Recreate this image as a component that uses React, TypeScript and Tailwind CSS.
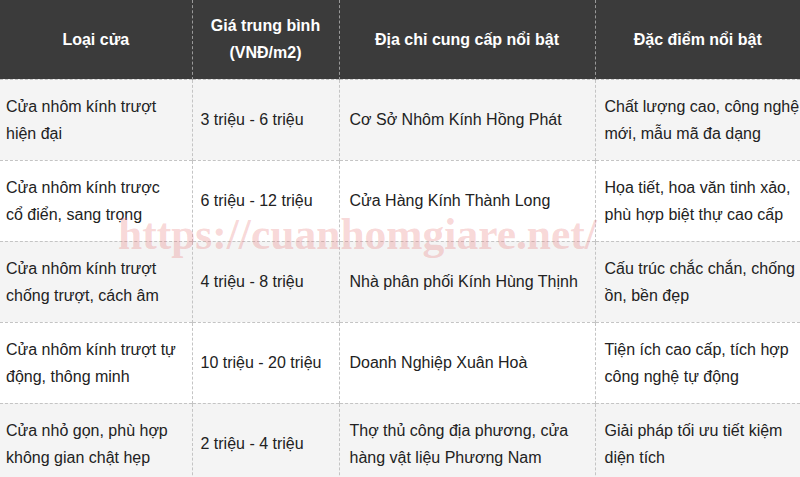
const rows = [
  {
    type: ["Cửa nhôm kính trượt", "hiện đại"],
    price: "3 triệu - 6 triệu",
    addr: ["Cơ Sở Nhôm Kính Hồng Phát"],
    feat: ["Chất lượng cao, công nghệ", "mới, mẫu mã đa dạng"],
  },
  {
    type: ["Cửa nhôm kính trược", "cổ điển, sang trọng"],
    price: "6 triệu - 12 triệu",
    addr: ["Cửa Hàng Kính Thành Long"],
    feat: ["Họa tiết, hoa văn tinh xảo,", "phù hợp biệt thự cao cấp"],
  },
  {
    type: ["Cửa nhôm kính trượt", "chống trượt, cách âm"],
    price: "4 triệu - 8 triệu",
    addr: ["Nhà phân phối Kính Hùng Thịnh"],
    feat: ["Cấu trúc chắc chắn, chống", "ồn, bền đẹp"],
  },
  {
    type: ["Cửa nhôm kính trượt tự", "động, thông minh"],
    price: "10 triệu - 20 triệu",
    addr: ["Doanh Nghiệp Xuân Hoà"],
    feat: ["Tiện ích cao cấp, tích hợp", "công nghệ tự động"],
  },
  {
    type: ["Cửa nhỏ gọn, phù hợp", "không gian chật hẹp"],
    price: "2 triệu - 4 triệu",
    addr: ["Thợ thủ công địa phương, cửa", "hàng vật liệu Phương Nam"],
    feat: ["Giải pháp tối ưu tiết kiệm", "diện tích"],
  },
];

function Lines({ lines }: { lines: string[] }) {
  return (
    <>
      {lines.map((l, i) => (
        <div key={i} className="whitespace-nowrap">
          {l}
        </div>
      ))}
    </>
  );
}

export default function App() {
  const th =
    "border-l border-dashed border-[#9a9a9a] first:border-l-0 text-center font-bold text-white px-2 align-middle";
  const td =
    "border-l border-dashed border-[#c4c4c4] first:border-l-0 align-middle text-[#222]";

  return (
    <div
      className="relative w-[800px] h-[477px] overflow-hidden bg-white"
      style={{ fontFamily: '"Liberation Sans", Arial, sans-serif' }}
    >
      <table className="w-[800px] border-collapse table-fixed text-[16px] leading-[27px]">
        <colgroup>
          <col className="w-[192px]" />
          <col className="w-[147px]" />
          <col className="w-[256px]" />
          <col className="w-[205px]" />
        </colgroup>
        <thead>
          <tr className="h-[79px] bg-[#3b3b3b] border-b border-dashed border-[#c4c4c4]">
            <th className={th}>Loại cửa</th>
            <th className={th}>
              Giá trung bình
              <br />
              (VNĐ/m2)
            </th>
            <th className={th}>Địa chỉ cung cấp nổi bật</th>
            <th className={th}>Đặc điểm nổi bật</th>
          </tr>
        </thead>
        <tbody>
          {rows.map((r, i) => (
            <tr
              key={i}
              className={`h-[81px] border-b border-dashed border-[#c4c4c4] ${
                i % 2 === 0 ? "bg-[#f4f4f4]" : "bg-white"
              }`}
            >
              <td className={`${td} pl-[6px] pr-1`}>
                <Lines lines={r.type} />
              </td>
              <td className={`${td} pl-[8px]`}>{r.price}</td>
              <td className={`${td} pl-[10px]`}>
                <Lines lines={r.addr} />
              </td>
              <td className={`${td} pl-[9px]`}>
                <Lines lines={r.feat} />
              </td>
            </tr>
          ))}
        </tbody>
      </table>

      {/* watermark */}
      <div
        className="absolute left-[118px] top-[213px] text-[43.5px] font-bold leading-none text-[rgba(232,120,120,0.3)] pointer-events-none whitespace-nowrap"
        style={{ fontFamily: '"Liberation Serif", "Times New Roman", serif' }}
      >
        https://cuanhomgiare.net/
      </div>
    </div>
  );
}
